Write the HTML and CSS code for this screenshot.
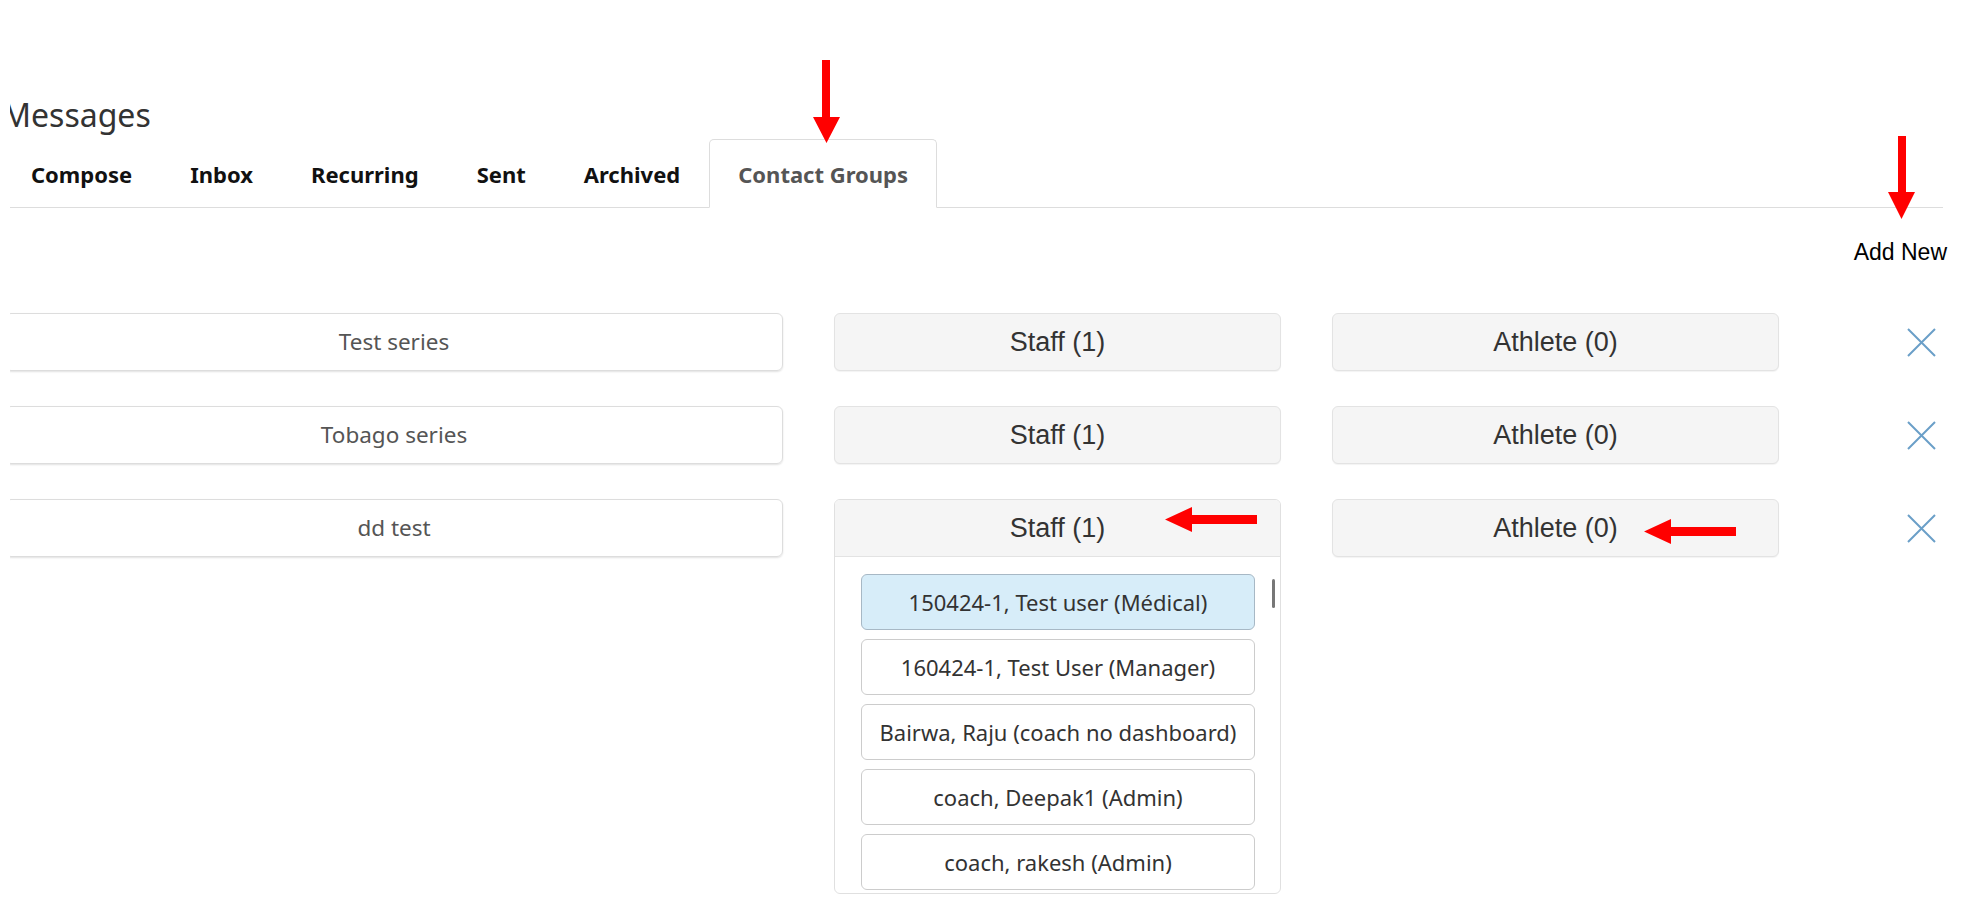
FILE: index.html
```html
<!DOCTYPE html>
<html lang="en">
<head>
    <meta charset="UTF-8">
    <meta name="viewport" content="width=device-width, initial-scale=1.0">
    <title>Messages - Contact Groups</title>
    <link rel="stylesheet" href="styles.css">
</head>
<body>
    <div class="content">
        <h2 class="page-title">Messages</h2>

        <ul class="tabs">
            <li class="tab">Compose</li>
            <li class="tab">Inbox</li>
            <li class="tab">Recurring</li>
            <li class="tab">Sent</li>
            <li class="tab">Archived</li>
            <li class="tab active">Contact Groups</li>
        </ul>

        <div class="toolbar">
            <a class="add-new">Add New</a>
        </div>

        <div class="groups">
            <div class="group-name">Test series</div>
            <div class="group-btn">Staff (1)</div>
            <div class="group-btn">Athlete (0)</div>
            <div class="group-remove">
                <svg width="29" height="29" viewBox="0 0 29 29"><path d="M1 1L28 28M28 1L1 28" /></svg>
            </div>

            <div class="group-name">Tobago series</div>
            <div class="group-btn">Staff (1)</div>
            <div class="group-btn">Athlete (0)</div>
            <div class="group-remove">
                <svg width="29" height="29" viewBox="0 0 29 29"><path d="M1 1L28 28M28 1L1 28" /></svg>
            </div>

            <div class="group-name">dd test</div>
            <div class="group-panel">
                <div class="panel-head">Staff (1)</div>
                <div class="panel-list">
                    <div class="scroll-thumb"></div>
                    <div class="member selected">150424-1, Test user (Médical)</div>
                    <div class="member">160424-1, Test User (Manager)</div>
                    <div class="member">Bairwa, Raju (coach no dashboard)</div>
                    <div class="member">coach, Deepak1 (Admin)</div>
                    <div class="member">coach, rakesh (Admin)</div>
                </div>
            </div>
            <div class="group-btn">Athlete (0)</div>
            <div class="group-remove">
                <svg width="29" height="29" viewBox="0 0 29 29"><path d="M1 1L28 28M28 1L1 28" /></svg>
            </div>
        </div>
    </div>

    <!-- red annotation arrows -->
    <svg class="mark mark-tab" width="27" height="83" viewBox="0 0 27 83"><polygon points="9,0 17,0 17,57 27,57 13.5,83 0,57 9,57" /></svg>
    <svg class="mark mark-add" width="27" height="83" viewBox="0 0 27 83"><polygon points="10,0 18,0 18,56 27,56 13.5,83 0,56 10,56" /></svg>
    <svg class="mark mark-staff" width="92" height="25" viewBox="0 0 92 25"><polygon points="0,12.5 27,0 27,8 92,8 92,17 27,17 27,25" /></svg>
    <svg class="mark mark-athlete" width="92" height="25" viewBox="0 0 92 25"><polygon points="0,12.5 27,0 27,8 92,8 92,17 27,17 27,25" /></svg>
</body>
</html>
```

FILE: styles.css
```css
* {
    margin: 0;
    padding: 0;
    box-sizing: border-box;
}

body {
    font-family: 'Noto Sans', 'Open Sans', sans-serif;
    background-color: #fff;
    color: #333;
}

.content {
    margin-left: 10px;
    padding-top: 95px;
    overflow: hidden;
}

.page-title {
    margin-left: -8px;
    font-size: 32px;
    font-weight: normal;
    line-height: 40px;
    color: #333;
}

.tabs {
    display: flex;
    list-style: none;
    margin: 4px 45px 0 -8px;
    border-bottom: 1px solid #ddd;
}

.tab {
    padding: 2px 28px 0;
    margin-bottom: -1px;
    font-size: 22px;
    font-weight: bold;
    line-height: 65px;
    color: #111;
    border: 1px solid transparent;
    border-radius: 5px 5px 0 0;
    cursor: pointer;
}

.tab.active {
    color: #555;
    background-color: #fff;
    border-color: #ddd;
    border-bottom-color: #fff;
}

.toolbar {
    margin-top: 31px;
    padding-right: 41px;
    text-align: right;
}

.add-new {
    font-family: 'Liberation Sans', Arial, sans-serif;
    font-size: 23px;
    line-height: 26px;
    color: #000;
    cursor: pointer;
}

.groups {
    display: grid;
    grid-template-columns: 778px 447px 447px auto;
    column-gap: 51px;
    row-gap: 35px;
    align-items: start;
    margin: 48px 0 0 -5px;
}

.group-name {
    height: 58px;
    line-height: 56px;
    text-align: center;
    font-size: 22.5px;
    color: #555;
    border: 1px solid #ddd;
    border-radius: 6px;
    box-shadow: 0 1px 2px rgba(0, 0, 0, 0.12);
}

.group-btn, .panel-head {
    height: 58px;
    line-height: 56px;
    text-align: center;
    font-family: 'Liberation Sans', Arial, sans-serif;
    font-size: 27px;
    color: #333;
    background-color: #f5f5f5;
    border: 1px solid #e3e3e3;
    border-radius: 6px;
    box-shadow: 0 1px 1px rgba(0, 0, 0, 0.05);
    cursor: pointer;
}

.group-remove {
    height: 58px;
    display: flex;
    align-items: center;
    margin-left: 77px;
    cursor: pointer;
}

.group-remove path {
    stroke: #6a9fc8;
    stroke-width: 2;
    fill: none;
}

.group-panel {
    border: 1px solid #e0e0e0;
    border-radius: 6px;
    overflow: hidden;
}

.panel-head {
    height: 57px;
    line-height: 56px;
    border: none;
    border-bottom: 1px solid #e3e3e3;
    border-radius: 0;
    box-shadow: none;
}

.panel-list {
    position: relative;
    padding: 17px 0 3px 26px;
}

.member {
    width: 394px;
    height: 56px;
    margin-bottom: 9px;
    line-height: 54px;
    text-align: center;
    font-size: 22px;
    color: #333;
    border: 1px solid #ccc;
    border-radius: 6px;
    cursor: pointer;
}

.member:last-child {
    margin-bottom: 0;
}

.member.selected {
    background-color: #d7edf9;
    border-color: #a7b8c5;
}

.scroll-thumb {
    position: absolute;
    top: 22px;
    right: 5px;
    width: 3px;
    height: 29px;
    background-color: #777;
    border-radius: 2px;
}

.mark {
    position: absolute;
    fill: #ff0000;
}

.mark-tab { left: 813px; top: 60px; }
.mark-add { left: 1888px; top: 136px; }
.mark-staff { left: 1165px; top: 507px; }
.mark-athlete { left: 1644px; top: 519px; }
```
